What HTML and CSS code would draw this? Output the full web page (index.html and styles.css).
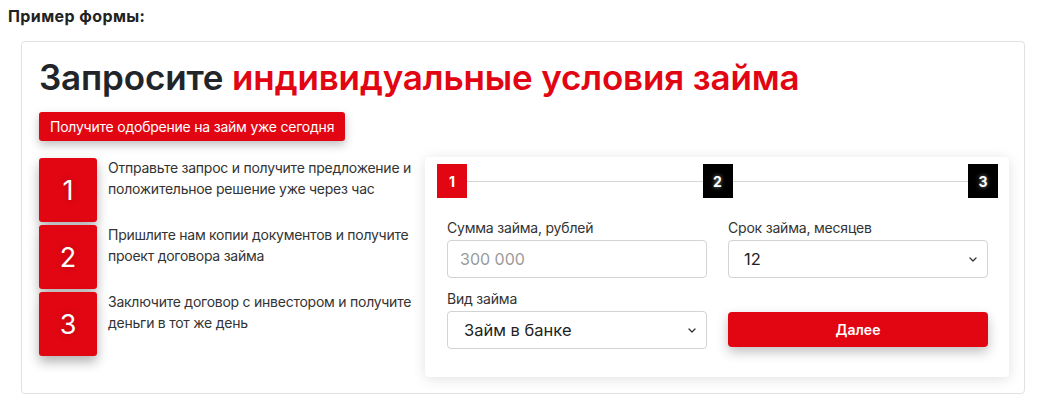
FILE: index.html
```html
<!DOCTYPE html>
<html lang="ru">
<head>
<meta charset="utf-8">
<title>Пример формы</title>
<link rel="stylesheet" href="styles.css">
</head>
<body>
<div class="caption">Пример формы:</div>
<div class="card">
  <h1 class="title">Запросите <span class="accent">индивидуальные условия займа</span></h1>
  <div class="tag">Получите одобрение на займ уже сегодня</div>
  <div class="content">
    <ul class="steps">
      <li class="step"><span class="step-num">1</span><span class="step-text">Отправьте запрос и получите предложение и положительное решение уже через час</span></li>
      <li class="step"><span class="step-num">2</span><span class="step-text">Пришлите нам копии документов и получите проект договора займа</span></li>
      <li class="step"><span class="step-num">3</span><span class="step-text">Заключите договор с инвестором и получите деньги в тот же день</span></li>
    </ul>
    <div class="form-card">
      <div class="stepper">
        <span class="dot dot-active">1</span>
        <span class="line"></span>
        <span class="dot">2</span>
        <span class="line"></span>
        <span class="dot">3</span>
      </div>
      <div class="form">
        <div class="field">
          <label class="label">Сумма займа, рублей</label>
          <input class="control input" type="text" placeholder="300 000">
        </div>
        <div class="field">
          <label class="label">Срок займа, месяцев</label>
          <div class="control select"><span class="select-val">12</span><svg class="chev" width="8" height="5" viewBox="0 0 8 5"><path d="M1 1l3 3 3-3" fill="none" stroke="#333" stroke-width="1.3" stroke-linecap="round" stroke-linejoin="round"/></svg></div>
        </div>
        <div class="field">
          <label class="label">Вид займа</label>
          <div class="control select"><span class="select-val">Займ в банке</span><svg class="chev" width="8" height="5" viewBox="0 0 8 5"><path d="M1 1l3 3 3-3" fill="none" stroke="#333" stroke-width="1.3" stroke-linecap="round" stroke-linejoin="round"/></svg></div>
        </div>
        <div class="field field-btn">
          <button class="btn" type="button">Далее</button>
        </div>
      </div>
    </div>
  </div>
</div>
</body>
</html>
```
FILE: styles.css
```css
* { box-sizing: border-box; }
html, body { margin: 0; padding: 0; background: #fff; }
body {
  font-family: "Inter", "Noto Sans", sans-serif;
  color: #222;
  width: 1040px;
  height: 400px;
  overflow: hidden;
}
.caption {
  font-weight: 700;
  font-size: 16px;
  line-height: 20px;
  letter-spacing: 0.4px;
  padding: 6px 0 0 8px;
  color: #222;
  height: 41px;
}
.card {
  margin-left: 21px;
  width: 1004px;
  height: 353px;
  border: 1px solid #e1e1e1;
  border-radius: 4px;
  padding: 14px 15px 0 17px;
}
.title {
  margin: 0;
  font-size: 35px;
  line-height: 42px;
  font-weight: 600;
  color: #212529;
  letter-spacing: -0.15px;
}
.accent { color: #e20613; }
.tag {
  display: inline-block;
  margin-top: 14px;
  height: 29px;
  line-height: 29px;
  padding: 0 11px;
  font-size: 14px;
  letter-spacing: -0.22px;
  color: #fff;
  background: #e20613;
  border-radius: 3px;
  box-shadow: 0 4px 10px rgba(0,0,0,0.25);
}
.content {
  margin-top: 16px;
  display: grid;
  grid-template-columns: 376px 584px;
  column-gap: 10px;
}
.steps {
  list-style: none;
  margin: 1px 0 0;
  padding: 0;
  display: flex;
  flex-direction: column;
  gap: 3px;
}
.step {
  display: flex;
  gap: 11px;
  height: 64px;
}
.step-num {
  flex: 0 0 58px;
  height: 64px;
  background: #e20613;
  color: #fff;
  border-radius: 3px;
  display: flex;
  align-items: center;
  justify-content: center;
  font-size: 27px;
  font-weight: 400;
  box-shadow: 0 6px 12px rgba(0,0,0,0.3);
  text-shadow: 0 0 6px rgba(0,0,0,0.25);
}
.step-text {
  font-size: 14px;
  line-height: 21px;
  letter-spacing: -0.25px;
  color: #333;
  margin-top: -1px;
}
.form-card {
  height: 220px;
  background: #fff;
  border-radius: 4px;
  box-shadow: 0 2px 14px rgba(0,0,0,0.12);
  padding: 7px 11px 0 12px;
}
.stepper {
  display: flex;
  align-items: center;
  height: 34px;
}
.dot {
  flex: 0 0 30px;
  height: 34px;
  background: #000;
  color: #fff;
  font-size: 14px;
  font-weight: 700;
  display: flex;
  align-items: center;
  justify-content: center;
  text-shadow: 0 0 4px rgba(255,255,255,0.6);
}
.dot-active { background: #e20613; text-shadow: none; }
.line {
  flex: 1;
  height: 1px;
  background: #d6d6d6;
}
.form {
  margin: 20px 10px 0;
  display: grid;
  grid-template-columns: 260px 260px;
  column-gap: 21px;
  row-gap: 11px;
}
.field { display: flex; flex-direction: column; }
.label {
  font-size: 14px;
  line-height: 20px;
  letter-spacing: -0.2px;
  color: #333;
  margin-bottom: 2px;
}
.control {
  height: 38px;
  border: 1px solid #d3d3d3;
  border-radius: 4px;
  background: #fff;
  font-family: "Inter", "Noto Sans", sans-serif;
  font-size: 16.5px;
  color: #222;
}
.input {
  padding: 0 12px;
  outline: none;
}
.input::placeholder { color: #9a9a9a; font-size: 16px; }
.select {
  display: flex;
  align-items: center;
  justify-content: space-between;
  padding: 0 10px 0 15px;
}
.field + .field + .field .select { padding-left: 16px; }
.field-btn { justify-content: flex-end; }
.btn {
  height: 35px;
  margin-bottom: 2px;
  border: none;
  border-radius: 4px;
  background: #e20613;
  color: #fff;
  font-family: "Inter", "Noto Sans", sans-serif;
  font-size: 14px;
  font-weight: 600;
  box-shadow: 0 5px 12px rgba(0,0,0,0.25);
}
```
